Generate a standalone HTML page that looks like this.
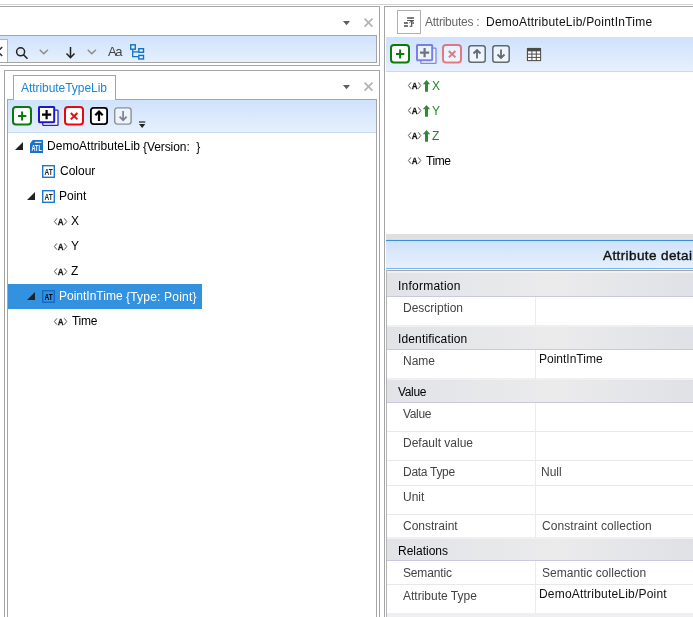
<!DOCTYPE html>
<html>
<head>
<meta charset="utf-8">
<title>Attribute Type Library</title>
<style>
html,body{margin:0;padding:0;background:#fff;}
body{width:693px;height:617px;position:relative;overflow:hidden;font-family:"Liberation Sans",sans-serif;font-size:12px;color:#000;}
.a{position:absolute;}
.hl{position:absolute;height:1px;}
.vl{position:absolute;width:1px;}
.t{position:absolute;white-space:nowrap;line-height:16px;height:16px;will-change:transform;}
.band{background:linear-gradient(#cfe2fc,#e6f0fd);}
svg{position:absolute;overflow:visible;will-change:transform;}
.cat{position:absolute;left:387px;width:306px;background:linear-gradient(90deg,#e1e3e7,#ebebec 55%,#dfe1e6);border-bottom:1px solid #c9c8dc;border-top:2px solid #f0f0f1;box-sizing:border-box;}
.row{position:absolute;left:387px;width:306px;background:#fff;border-bottom:1px solid #e8e8e8;}
.lab{color:#444;}
</style>
</head>
<body>

<!-- ===== global frame lines ===== -->
<div class="hl" style="left:0;top:4px;width:693px;background:#d4d4d4;"></div>
<div class="hl" style="left:0;top:6px;width:380px;background:#a5a5a5;"></div>
<div class="vl" style="left:379px;top:6px;height:60px;background:#a5a5a5;"></div>
<div class="vl" style="left:379px;top:70px;height:547px;background:#a5a5a5;"></div>
<div class="hl" style="left:384px;top:6px;width:309px;background:#a5a5a5;"></div>
<div class="vl" style="left:384px;top:6px;height:611px;background:#a5a5a5;"></div>

<!-- ===== left: search panel ===== -->
<svg style="left:343px;top:20.8px" width="7" height="4" viewBox="0 0 7 4"><path d="M0 0h7L3.500 4.200z" fill="#606060"/></svg>
<svg style="left:363.500px;top:18.4px" width="9" height="9" viewBox="0 0 9 9"><path d="M0.600 0.600l7.800 8M8.400 0.600l-7.800 8" stroke="#b4b4b4" stroke-width="1.700" fill="none"/></svg>

<div class="a band" style="left:0;top:36px;width:376px;height:26px;"></div>
<div class="hl" style="left:0;top:35px;width:377px;background:#a5a5a5;"></div>
<div class="vl" style="left:376px;top:35px;height:28px;background:#a5a5a5;"></div>
<div class="hl" style="left:0;top:62px;width:377px;background:#a5a5a5;"></div>
<div class="hl" style="left:0;top:65px;width:380px;background:#a5a5a5;"></div>
<div class="a" style="left:0;top:39px;width:7px;height:23px;background:#fff;border-right:1px solid #b5b5b5;border-top:1px solid #b5b5b5;box-sizing:border-box;width:8px;"></div>
<svg style="left:0;top:46px" width="3" height="11" viewBox="0 0 3 11"><path d="M-1 4.200L2.200 1M-1 6.800L2.200 10" stroke="#333" stroke-width="1.600" fill="none"/></svg>

<!-- search toolbar icons -->
<svg style="left:15px;top:46px" width="14" height="14" viewBox="0 0 14 14"><circle cx="5.6" cy="5.8" r="4" fill="none" stroke="#222" stroke-width="1.5"/><path d="M8.5 8.8l4 4" stroke="#222" stroke-width="1.6"/></svg>
<svg style="left:39px;top:49px" width="10" height="6" viewBox="0 0 10 6"><path d="M0.7 0.7l4.1 4 4.1-4" fill="none" stroke="#8a8a8a" stroke-width="1.400"/></svg>
<svg style="left:65px;top:45px" width="11" height="14" viewBox="0 0 11 14"><path d="M5.500 2v10.500M1.500 8.500l4 4.200L9.500 8.500" fill="none" stroke="#222" stroke-width="1.500"/></svg>
<svg style="left:87px;top:49px" width="10" height="6" viewBox="0 0 10 6"><path d="M0.7 0.7l4.1 4 4.1-4" fill="none" stroke="#8a8a8a" stroke-width="1.400"/></svg>
<div class="t" id="aa" style="left:108px;top:43.500px;font-size:13px;letter-spacing:-1.300px;color:#444;">Aa</div>
<svg style="left:130px;top:44px" width="15" height="16" viewBox="0 0 15 16"><g fill="#e4effc" stroke="#1273c4" stroke-width="1.4"><rect x="0.700" y="0.800" width="4.600" height="4.400"/><rect x="8.800" y="4.700" width="4.700" height="3.600"/><rect x="8.800" y="11.400" width="4.700" height="3.600"/></g><path d="M2.700 5.900v6.800h5.400M2.700 7.900h5.400" fill="none" stroke="#1273c4" stroke-width="1.300"/></svg>

<!-- ===== left: AttributeTypeLib panel ===== -->
<div class="hl" style="left:4px;top:70px;width:376px;background:#a5a5a5;"></div>
<div class="vl" style="left:4px;top:70px;height:547px;background:#a5a5a5;"></div>
<div class="vl" style="left:7px;top:99px;height:518px;background:#a5a5a5;"></div>
<div class="vl" style="left:376px;top:99px;height:518px;background:#a5a5a5;"></div>
<div class="hl" style="left:7px;top:99px;width:370px;background:#a5a5a5;"></div>
<div class="a band" style="left:8px;top:100px;width:368px;height:32px;border-bottom:1px solid #c5dbf5;"></div>
<!-- tab -->
<div class="a" style="left:13px;top:75px;width:103px;height:25px;box-sizing:border-box;border:1px solid #a5a5a5;border-bottom:none;background:#fff;"></div>
<div class="t" id="tab" style="left:21.400px;top:80px;color:#1c86d8;letter-spacing:-0.05px;">AttributeTypeLib</div>
<svg style="left:343px;top:84.8px" width="7" height="4" viewBox="0 0 7 4"><path d="M0 0h7L3.500 4.200z" fill="#606060"/></svg>
<svg style="left:363.500px;top:82.4px" width="9" height="9" viewBox="0 0 9 9"><path d="M0.600 0.600l7.800 8M8.400 0.600l-7.800 8" stroke="#b4b4b4" stroke-width="1.700" fill="none"/></svg>

<!-- tree toolbar icons -->
<svg style="left:12px;top:106px" width="20" height="20" viewBox="0 0 20 20"><rect x="1" y="1" width="18" height="17.600" rx="3" fill="#fff" stroke="#0a7a0a" stroke-width="2"/><path d="M10.100 5.600v8.800M6 10h8.300" stroke="#0a7a0a" stroke-width="2"/></svg>
<svg style="left:38px;top:106px" width="21" height="20" viewBox="0 0 21 20"><rect x="4.800" y="4.200" width="15.200" height="15.200" rx="0.500" fill="#fff" stroke="#2424d8" stroke-width="1.300"/><rect x="1" y="1" width="15.200" height="15.200" rx="0.600" fill="#fff" stroke="#1a1ac8" stroke-width="2"/><path d="M8.600 4v9.200M4 8.600h9.200" stroke="#000" stroke-width="2.200"/></svg>
<svg style="left:64px;top:106px" width="20" height="20" viewBox="0 0 20 20"><rect x="1" y="1" width="18" height="17.600" rx="3" fill="#fff" stroke="#e80a0a" stroke-width="2"/><path d="M6.800 7l6.600 6.400M13.400 7l-6.600 6.400" stroke="#e80a0a" stroke-width="2"/></svg>
<svg style="left:90px;top:107px" width="18" height="18" viewBox="0 0 18 18"><rect x="0.900" y="0.900" width="16.200" height="16.200" rx="2.500" fill="#fff" stroke="#000" stroke-width="1.800"/><path d="M9 14v-9.500M5.300 8.300L9 4.500l3.700 3.800" fill="none" stroke="#000" stroke-width="2.200"/></svg>
<svg style="left:114px;top:107px" width="18" height="18" viewBox="0 0 18 18"><rect x="0.700" y="0.900" width="16.400" height="16.200" rx="2.500" fill="#eef3fb" stroke="#8b909a" stroke-width="1.400"/><path d="M9.100 4v9.300M5.600 9.700l3.500 3.600 3.500-3.600" fill="none" stroke="#7b8190" stroke-width="1.700"/></svg>
<svg style="left:139px;top:121px" width="7" height="8" viewBox="0 0 7 8"><path d="M0 1h6.300" stroke="#222" stroke-width="1.200"/><path d="M0 3h6.300L3.150 7z" fill="#222"/></svg>

<!-- tree -->
<div class="a" style="left:8px;top:284px;width:194px;height:25px;background:#3392e0;"></div>

<svg style="left:15px;top:142px" width="8" height="8" viewBox="0 0 8 8"><path d="M8 0v8H0z" fill="#222"/></svg>
<svg style="left:30px;top:140px" width="13" height="13" viewBox="0 0 13 13"><path d="M0 3.600L2.800 0H13V13H0z" fill="#1a72c8"/><path d="M4.800 2.300H11.400" stroke="#fff" stroke-width="1"/><text x="6.700" y="11" font-size="8.600" font-weight="bold" fill="#fff" text-anchor="middle" font-family="Liberation Sans, sans-serif" textLength="10.400" lengthAdjust="spacingAndGlyphs">ATL</text></svg>
<div class="t" id="t1" style="left:47px;top:138px;letter-spacing:0.02px;">DemoAttributeLib</div>
<div class="t" id="t1b" style="left:143.300px;top:139px;font-size:12px;letter-spacing:-0.08px;">{Version:&nbsp; }</div>

<svg class="at" style="left:42px;top:165px" width="13" height="13" viewBox="0 0 13 13"><rect x="0.700" y="0.700" width="11.600" height="11.600" fill="#fff" stroke="#1c78d0" stroke-width="1.400"/><text x="6.700" y="9.600" font-size="9.400" font-weight="bold" fill="#222" text-anchor="middle" font-family="Liberation Sans, sans-serif" textLength="8.200" lengthAdjust="spacingAndGlyphs">AT</text></svg>
<div class="t" id="t2" style="left:60px;top:163px;margin-left:0;">Colour</div>

<svg style="left:27px;top:192px" width="8" height="8" viewBox="0 0 8 8"><path d="M8 0v8H0z" fill="#222"/></svg>
<svg style="left:42px;top:190px" width="13" height="13" viewBox="0 0 13 13"><rect x="0.700" y="0.700" width="11.600" height="11.600" fill="#fff" stroke="#1c78d0" stroke-width="1.400"/><text x="6.700" y="9.600" font-size="9.400" font-weight="bold" fill="#222" text-anchor="middle" font-family="Liberation Sans, sans-serif" textLength="8.200" lengthAdjust="spacingAndGlyphs">AT</text></svg>
<div class="t" id="t3" style="left:59px;top:188px;">Point</div>

<svg style="left:53px;top:217px" width="14" height="8" viewBox="-0.5 -0.6 14 8"><path d="M3.500 0.700L0.900 3.900L3.500 7.100M10.700 0.700L13.300 3.900L10.700 7.100" fill="none" stroke="#555" stroke-width="1"/><text transform="translate(7.100,7.400) scale(0.860,1)" font-size="9.400" font-weight="bold" fill="#111" stroke="#111" stroke-width="0.250" text-anchor="middle" font-family="Liberation Sans, sans-serif">A</text></svg>
<div class="t" id="t4" style="left:71px;top:213px;">X</div>
<svg style="left:53px;top:242px" width="14" height="8" viewBox="-0.5 -0.6 14 8"><path d="M3.500 0.700L0.900 3.900L3.500 7.100M10.700 0.700L13.300 3.900L10.700 7.100" fill="none" stroke="#555" stroke-width="1"/><text transform="translate(7.100,7.400) scale(0.860,1)" font-size="9.400" font-weight="bold" fill="#111" stroke="#111" stroke-width="0.250" text-anchor="middle" font-family="Liberation Sans, sans-serif">A</text></svg>
<div class="t" id="t5" style="left:71px;top:238px;">Y</div>
<svg style="left:53px;top:267px" width="14" height="8" viewBox="-0.5 -0.6 14 8"><path d="M3.500 0.700L0.900 3.900L3.500 7.100M10.700 0.700L13.300 3.900L10.700 7.100" fill="none" stroke="#555" stroke-width="1"/><text transform="translate(7.100,7.400) scale(0.860,1)" font-size="9.400" font-weight="bold" fill="#111" stroke="#111" stroke-width="0.250" text-anchor="middle" font-family="Liberation Sans, sans-serif">A</text></svg>
<div class="t" id="t6" style="left:71px;top:263px;">Z</div>

<svg style="left:27px;top:292px" width="8" height="8" viewBox="0 0 8 8"><path d="M8 0v8H0z" fill="#222"/></svg>
<svg style="left:42px;top:290px" width="13" height="13" viewBox="0 0 13 13"><rect x="0.700" y="0.700" width="11.600" height="11.600" fill="#3392e0" stroke="#166ac6" stroke-width="1.400"/><text x="6.700" y="9.600" font-size="9.400" font-weight="bold" fill="#000" text-anchor="middle" font-family="Liberation Sans, sans-serif" textLength="8.200" lengthAdjust="spacingAndGlyphs">AT</text></svg>
<div class="t" id="t7" style="left:59px;top:288px;color:#fff;">PointInTime</div>
<div class="t" id="t7b" style="left:126px;top:289px;color:#fff;font-size:12px;letter-spacing:0.2px;">{Type: Point}</div>

<svg style="left:53px;top:317px" width="14" height="8" viewBox="-0.5 -0.6 14 8"><path d="M3.500 0.700L0.900 3.900L3.500 7.100M10.700 0.700L13.300 3.900L10.700 7.100" fill="none" stroke="#555" stroke-width="1"/><text transform="translate(7.100,7.400) scale(0.860,1)" font-size="9.400" font-weight="bold" fill="#111" stroke="#111" stroke-width="0.250" text-anchor="middle" font-family="Liberation Sans, sans-serif">A</text></svg>
<div class="t" id="t8" style="left:71.500px;top:313px;letter-spacing:-0.3px;">Time</div>

<!-- ===== right panel ===== -->
<div class="a" style="left:397px;top:10px;width:24px;height:24px;box-sizing:border-box;border:1px solid #b0b0b0;background:#fff;"></div>
<svg style="left:404px;top:17px" width="11" height="10" viewBox="0 0 11 10"><g fill="none" stroke="#444"><path d="M3.100 1H10" stroke-width="1.400"/><path d="M3.100 3.500H10" stroke-width="0.900"/><path d="M0 6H3.900M0 9H3.900" stroke-width="1.300"/><path d="M7.700 3.500V9.200H5.600" stroke-width="1.100"/><path d="M7.300 4L5.200 6.200M8.200 4.400L10 5.700M8.200 6.300H10" stroke-width="0.900"/></g></svg>
<div class="t" id="r1" style="left:425px;top:14px;color:#666;letter-spacing:-0.25px;">Attributes :</div>
<div class="t" id="r2" style="left:486px;top:14px;color:#111;letter-spacing:0.24px;">DemoAttributeLib/PointInTime</div>

<div class="a band" style="left:386px;top:37px;width:307px;height:34px;border-bottom:1px solid #c5dbf5;"></div>
<svg style="left:390px;top:44px" width="20" height="20" viewBox="0 0 20 20"><rect x="1" y="1" width="18" height="17.600" rx="3" fill="#fff" stroke="#0a7a0a" stroke-width="2"/><path d="M10.100 5.600v8.800M6 10h8.300" stroke="#0a7a0a" stroke-width="2"/></svg>
<svg style="left:416px;top:44px;opacity:0.5" width="21" height="20" viewBox="0 0 21 20"><rect x="4.800" y="4.200" width="15.200" height="15.200" rx="0.500" fill="#fff" stroke="#2424d8" stroke-width="1.300"/><rect x="1" y="1" width="15.200" height="15.200" rx="0.600" fill="#fff" stroke="#1a1ac8" stroke-width="2"/><path d="M8.600 4v9.200M4 8.600h9.200" stroke="#000" stroke-width="2.200"/></svg>
<svg style="left:442px;top:44px;opacity:0.5" width="20" height="20" viewBox="0 0 20 20"><rect x="1" y="1" width="18" height="17.600" rx="3" fill="#fff" stroke="#e80a0a" stroke-width="2"/><path d="M6.800 7l6.600 6.400M13.400 7l-6.600 6.400" stroke="#e80a0a" stroke-width="2"/></svg>
<svg style="left:468px;top:45px;opacity:0.55" width="18" height="18" viewBox="0 0 18 18"><rect x="0.800" y="0.800" width="16.400" height="16.400" rx="2.500" fill="#fff" stroke="#000" stroke-width="1.500"/><path d="M9 13.500v-8.500M5.500 8.500L9 5l3.500 3.500" fill="none" stroke="#000" stroke-width="1.800"/></svg>
<svg style="left:492px;top:45px;opacity:0.55" width="18" height="18" viewBox="0 0 18 18"><rect x="0.800" y="0.800" width="16.400" height="16.400" rx="2.500" fill="#fff" stroke="#000" stroke-width="1.500"/><path d="M9 4.500v8.500M5.500 9.500L9 13l3.500-3.500" fill="none" stroke="#000" stroke-width="1.800"/></svg>
<svg style="left:525.500px;top:46.500px" width="16" height="15" viewBox="0 0 16 15"><rect x="0" y="0" width="16" height="15" fill="#f4f8fe"/><rect x="0.800" y="0.800" width="14.400" height="13.400" fill="#4c4c4c"/><g fill="#fff"><rect x="2" y="4.300" width="3.400" height="2.300"/><rect x="6.400" y="4.300" width="3.400" height="2.300"/><rect x="10.800" y="4.300" width="3.300" height="2.300"/><rect x="2" y="7.600" width="3.400" height="2.300"/><rect x="6.400" y="7.600" width="3.400" height="2.300"/><rect x="10.800" y="7.600" width="3.300" height="2.300"/><rect x="2" y="10.900" width="3.400" height="2.200"/><rect x="6.400" y="10.900" width="3.400" height="2.200"/><rect x="10.800" y="10.900" width="3.300" height="2.200"/></g></svg>

<!-- attribute list -->
<svg style="left:407px;top:81px" width="14" height="8" viewBox="-0.5 -0.6 14 8"><path d="M3.500 0.700L0.900 3.900L3.500 7.100M10.700 0.700L13.300 3.900L10.700 7.100" fill="none" stroke="#555" stroke-width="1"/><text transform="translate(7.100,7.400) scale(0.860,1)" font-size="9.400" font-weight="bold" fill="#111" stroke="#111" stroke-width="0.250" text-anchor="middle" font-family="Liberation Sans, sans-serif">A</text></svg>
<svg class="ga" style="left:423px;top:80px" width="7" height="12" viewBox="0 0 7 12"><path d="M3.500 0L7.200 4.300H5V11.800H2V4.300H-0.200z" fill="#2e8b35"/></svg>
<div class="t" id="l1" style="left:432px;top:78px;color:#1e8a1e;">X</div>
<svg style="left:407px;top:106px" width="14" height="8" viewBox="-0.5 -0.6 14 8"><path d="M3.500 0.700L0.900 3.900L3.500 7.100M10.700 0.700L13.300 3.900L10.700 7.100" fill="none" stroke="#555" stroke-width="1"/><text transform="translate(7.100,7.400) scale(0.860,1)" font-size="9.400" font-weight="bold" fill="#111" stroke="#111" stroke-width="0.250" text-anchor="middle" font-family="Liberation Sans, sans-serif">A</text></svg>
<svg class="ga" style="left:423px;top:105px" width="7" height="12" viewBox="0 0 7 12"><path d="M3.500 0L7.200 4.300H5V11.800H2V4.300H-0.200z" fill="#2e8b35"/></svg>
<div class="t" id="l2" style="left:432px;top:103px;color:#1e8a1e;">Y</div>
<svg style="left:407px;top:131px" width="14" height="8" viewBox="-0.5 -0.6 14 8"><path d="M3.500 0.700L0.900 3.900L3.500 7.100M10.700 0.700L13.300 3.900L10.700 7.100" fill="none" stroke="#555" stroke-width="1"/><text transform="translate(7.100,7.400) scale(0.860,1)" font-size="9.400" font-weight="bold" fill="#111" stroke="#111" stroke-width="0.250" text-anchor="middle" font-family="Liberation Sans, sans-serif">A</text></svg>
<svg class="ga" style="left:423px;top:130px" width="7" height="12" viewBox="0 0 7 12"><path d="M3.500 0L7.200 4.300H5V11.800H2V4.300H-0.200z" fill="#2e8b35"/></svg>
<div class="t" id="l3" style="left:432px;top:128px;color:#1e8a1e;">Z</div>
<svg style="left:407px;top:156px" width="14" height="8" viewBox="-0.5 -0.6 14 8"><path d="M3.500 0.700L0.900 3.900L3.500 7.100M10.700 0.700L13.300 3.900L10.700 7.100" fill="none" stroke="#555" stroke-width="1"/><text transform="translate(7.100,7.400) scale(0.860,1)" font-size="9.400" font-weight="bold" fill="#111" stroke="#111" stroke-width="0.250" text-anchor="middle" font-family="Liberation Sans, sans-serif">A</text></svg>
<div class="t" id="l4" style="left:425.500px;top:153px;letter-spacing:-0.45px;">Time</div>

<!-- details header -->
<div class="a" style="left:386px;top:234px;width:307px;height:5px;background:#e0dfdf;"></div>
<div class="a" style="left:386px;top:239px;width:307px;height:1px;background:#cfdcec;"></div>
<div class="a" style="left:386px;top:240px;width:307px;height:1px;background:#3a8ede;"></div>
<div class="a band" style="left:386px;top:241px;width:307px;height:27px;border-bottom:1px solid #7ab4ea;"></div>
<div class="t" id="hd" style="left:603px;top:248px;font-size:13.500px;font-weight:normal;color:#111;-webkit-text-stroke:0.4px #111;letter-spacing:0.4px;">Attribute details</div>
<div class="hl" style="left:386px;top:270px;width:307px;background:#a5a5a5;"></div>
<div class="vl" style="left:386px;top:270px;height:347px;background:#b5b5b5;"></div>

<!-- property grid -->
<div class="cat" style="top:271px;height:26px;"></div>
<div class="t" id="c1" style="left:398px;top:278px;letter-spacing:0.24px;">Information</div>
<div class="row" style="top:297px;height:28px;border-bottom:none;"></div>
<div class="t lab" id="p1" style="left:403px;top:300px;">Description</div>

<div class="cat" style="top:325px;height:25px;"></div>
<div class="t" id="c2" style="left:398px;top:331px;letter-spacing:0.14px;">Identification</div>
<div class="row" style="top:350px;height:28px;border-bottom:none;"></div>
<div class="t lab" id="p2" style="left:403px;top:353px;">Name</div>
<div class="t" id="v2" style="left:539px;top:351px;color:#111;">PointInTime</div>

<div class="cat" style="top:378px;height:25px;"></div>
<div class="t" id="c3" style="left:398px;top:384px;letter-spacing:-0.34px;">Value</div>
<div class="row" style="top:403px;height:28px;"></div>
<div class="t lab" id="p3" style="left:403px;top:406px;letter-spacing:-0.34px;">Value</div>
<div class="row" style="top:432px;height:28px;"></div>
<div class="t lab" id="p4" style="left:403px;top:435px;">Default value</div>
<div class="row" style="top:461px;height:24px;"></div>
<div class="t lab" id="p5" style="left:403px;top:464px;letter-spacing:-0.29px;">Data Type</div>
<div class="t lab" id="v5" style="left:541px;top:464px;">Null</div>
<div class="row" style="top:486px;height:28px;"></div>
<div class="t lab" id="p6" style="left:403px;top:489px;">Unit</div>
<div class="row" style="top:515px;height:23px;border-bottom:none;"></div>
<div class="t lab" id="p7" style="left:403px;top:518px;">Constraint</div>
<div class="t lab" id="v7" style="left:542px;top:518px;letter-spacing:0.08px;">Constraint collection</div>

<div class="cat" style="top:537px;height:24px;"></div>
<div class="t" id="c4" style="left:398px;top:543px;">Relations</div>
<div class="row" style="top:561px;height:23px;"></div>
<div class="t lab" id="p8" style="left:403px;top:565px;letter-spacing:-0.16px;">Semantic</div>
<div class="t lab" id="v8" style="left:542px;top:565px;letter-spacing:0.04px;">Semantic collection</div>
<div class="row" style="top:585px;height:28px;border-bottom:none;"></div>
<div class="t lab" id="p9" style="left:403px;top:588px;">Attribute Type</div>
<div class="t" id="v9" style="left:539px;top:586px;color:#111;letter-spacing:0.2px;">DemoAttributeLib/Point</div>
<div class="a" style="left:387px;top:613px;width:306px;height:4px;background:#efeff1;"></div>

<!-- column divider -->
<div class="vl" style="left:535px;top:297px;height:29px;background:#ececec;"></div>
<div class="vl" style="left:535px;top:350px;height:29px;background:#ececec;"></div>
<div class="vl" style="left:535px;top:403px;height:135px;background:#ececec;"></div>
<div class="vl" style="left:535px;top:561px;height:52px;background:#ececec;"></div>

<style>
.ai{font-size:9px;letter-spacing:-0.3px;color:#222;}
.ai b{font-size:8.500px;}
</style>
</body>
</html>
